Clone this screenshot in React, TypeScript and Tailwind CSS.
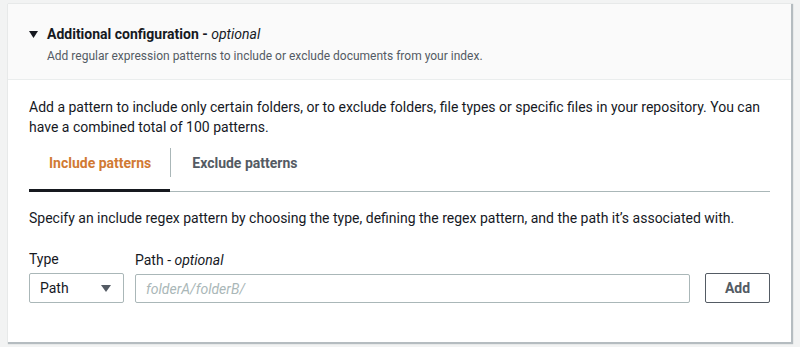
import React, { useState } from 'react';

const App: React.FC = () => {
  const [tab, setTab] = useState<'include' | 'exclude'>('include');
  const [path, setPath] = useState('');

  return (
    <div
      className="w-[800px] h-[347px] bg-[#f2f3f3] pt-[4px] pl-[8px] text-[#16191f]"
      style={{ fontFamily: 'Roboto, Arial, sans-serif' }}
    >
      <div className="w-[783px] h-[338px] bg-white shadow-[1px_1px_1px_1px_rgba(0,22,40,0.25)]">
        <div className="h-[76px] bg-[#fafafa] border-b border-[#eaeded] pl-[21px] pt-[20px]">
          <div className="flex items-center">
            <svg width="9" height="7" viewBox="0 0 9 7" className="mr-[9px]">
              <path d="M0 0 H9 L4.5 7 Z" fill="#16191f" />
            </svg>
            <span className="text-[14px] font-bold leading-[20px]">
              Additional configuration - <i className="font-normal">optional</i>
            </span>
          </div>
          <p className="pl-[18px] mt-[4px] text-[12px] leading-[16px] text-[#545b64]">
            Add regular expression patterns to include or exclude documents from your index.
          </p>
        </div>

        <div className="px-[21px] pt-[17px]">
          <p className="text-[14px] leading-[20px]">
            Add a pattern to include only certain folders, or to exclude folders, file types or specific files in your
            repository. You can
            <br />
            have a combined total of 100 patterns.
          </p>

          <div className="w-[741px] flex border-b border-[#aab7b8]">
            <button
              className={`relative h-[54px] pt-[16px] pb-[18px] pl-[20px] pr-[19px] leading-[20px] text-[14px] font-bold ${tab === 'include' ? 'text-[#d17a34]' : 'text-[#545b64]'}`}
              onClick={() => setTab('include')}
            >
              Include patterns
              {tab === 'include' && <span className="absolute left-0 right-0 -bottom-[1px] h-[3px] bg-[#16191f]" />}
            </button>
            <div className="w-px h-[29px] mt-[11px] bg-[#aab7b8]" />
            <button
              className={`relative h-[54px] pt-[16px] pb-[18px] px-[21px] leading-[20px] text-[14px] font-bold ${tab === 'exclude' ? 'text-[#d17a34]' : 'text-[#545b64]'}`}
              onClick={() => setTab('exclude')}
            >
              Exclude patterns
              {tab === 'exclude' && <span className="absolute left-0 right-0 -bottom-[1px] h-[3px] bg-[#16191f]" />}
            </button>
          </div>

          <p className="mt-[16px] text-[14px] leading-[20px]">
            Specify an include regex pattern by choosing the type, defining the regex pattern, and the path it’s associated with.
          </p>

          <div className="mt-[21px] flex items-end">
            <div className="w-[95px]">
              <div className="text-[14px] leading-[20px] mb-[4px]">Type</div>
              <div className="h-[30px] border border-[#aab7b8] rounded-[2px] flex items-center justify-between pl-[10px] pr-[12px] text-[14px]">
                <span>Path</span>
                <svg width="10" height="7" viewBox="0 0 10 7">
                  <path d="M0 0 H10 L5 7 Z" fill="#545b64" />
                </svg>
              </div>
            </div>
            <div className="ml-[11px] w-[555px]">
              <div className="text-[14px] leading-[20px] mb-[4px]">
                Path - <i>optional</i>
              </div>
              <input
                value={path}
                onChange={(e) => setPath(e.target.value)}
                placeholder="folderA/folderB/"
                className="w-full h-[29px] border border-[#aab7b8] rounded-[2px] px-[10px] text-[14px] italic placeholder:text-[#aab7b8] outline-none"
              />
            </div>
            <button className="ml-[15px] w-[65px] h-[30px] border border-[#545b64] rounded-[2px] text-[14px] font-bold text-[#545b64]">
              Add
            </button>
          </div>
        </div>
      </div>
    </div>
  );
};

export default App;
